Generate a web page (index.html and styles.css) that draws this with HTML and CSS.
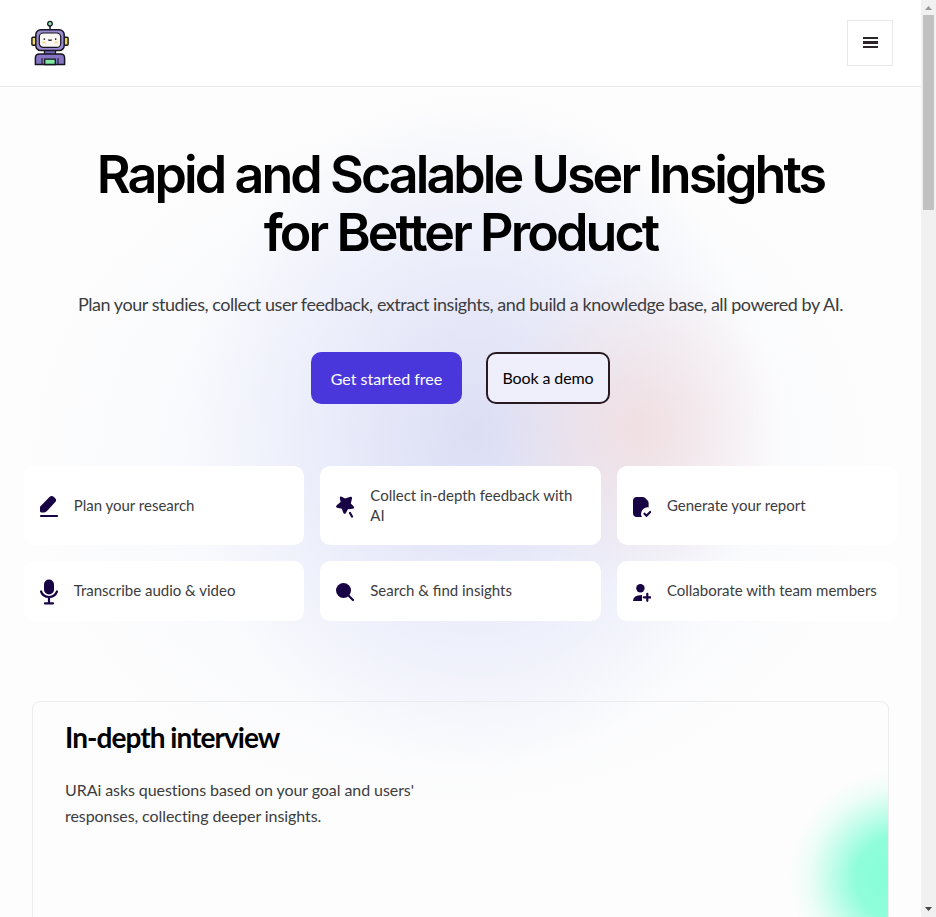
FILE: index.html
```html
<!DOCTYPE html>
<html lang="en">
<head>
<meta charset="utf-8">
<title>URAi</title>
<link rel="stylesheet" href="styles.css">
</head>
<body>
<div class="page">
  <header class="header">
    <svg class="logo" viewBox="0 0 40 46" aria-label="URAi">
      <path d="M20 6v4" stroke="#161522" stroke-width="1.5"/>
      <circle cx="20" cy="3.7" r="2.3" fill="#8be8a4" stroke="#161522" stroke-width="1.3"/>
      <rect x="1.9" y="17.2" width="5" height="8" rx="1" fill="#f3d750" stroke="#161522" stroke-width="1.4"/>
      <rect x="33.1" y="17.2" width="5" height="8" rx="1" fill="#f3d750" stroke="#161522" stroke-width="1.4"/>
      <rect x="14.5" y="29" width="11" height="6" fill="#7565b5" stroke="#161522" stroke-width="1.3"/>
      <rect x="5.8" y="9.8" width="28.4" height="20.8" rx="5" fill="#9b8bd0" stroke="#161522" stroke-width="1.5"/>
      <rect x="9.3" y="13" width="21.4" height="14.4" rx="4" fill="#fbf7f3" stroke="#161522" stroke-width="1.2"/>
      <path d="M14.3 18.2v1.8M25.7 18.2v1.8M18.3 19.7q1.7 1.2 3.4 0" fill="none" stroke="#161522" stroke-width="1.2"/>
      <path d="M12.3 22.5h3.2M24.5 22.5h3.2" stroke="#f2dc9a" stroke-width="2"/>
      <path d="M5.4 44.6V38q0-4 4-4h21.2q4 0 4 4v6.6z" fill="#8575c2" stroke="#161522" stroke-width="1.5"/>
      <path d="M12 44v-6M28 44v-6" stroke="#161522" stroke-width="1"/>
      <path d="M14.7 44.5v-5.3h10.6v5.3z" fill="#83e9a1" stroke="#161522" stroke-width="1.3"/>
    </svg>
    <button class="menu" aria-label="Menu"><span></span><span></span><span></span></button>
  </header>
  <main class="main">
    <h1>Rapid and Scalable User Insights<br>for Better Product</h1>
    <p class="lead">Plan your studies, collect user feedback, extract insights, and build a knowledge base, all powered by AI.</p>
    <div class="actions">
      <a class="btn primary">Get started free</a>
      <a class="btn outline">Book a demo</a>
    </div>
    <div class="features">
      <div class="card">
        <svg viewBox="0 0 18 22" height="22"><path d="M0 10.8 9.2 1.2Q11.5-.9 13.7.8L15.2 2.2Q17 4 15.3 6.1L7 15Q5.8 16.4 4.2 16.4H1.2Q0 16.4 0 15z"/><rect y="19" width="18" height="2.1" rx=".8"/></svg>
        <span>Plan your research</span>
      </div>
      <div class="card">
        <svg viewBox="0 0 18 22" height="22"><path d="M5.2.5 9.1 2.6 14.4.7Q16.5.5 16 2.6L14.8 7.4 18 10.8Q18.7 12.4 16.6 12.7L11.9 13.2 9.8 17.2Q8.6 18.6 7.4 17L5.8 12.8 1 11.7Q-.6 10.7.7 9.2L4.6 6 3.8 1.9Q3.8.1 5.2.5z"/><path class="line" d="m14 17 2 3.5"/></svg>
        <span>Collect in-depth feedback with AI</span>
      </div>
      <div class="card">
        <svg viewBox="0 0 18 22" height="22"><path d="M4 1h5.8q1.2 0 2.1.8l2.7 2.8q1 1 1 2.3v4.5A6.5 6.5 0 0 0 8 18q0 1.5 1 3H4q-4 0-4-4V5q0-4 4-4z"/><path class="line" d="m11.5 17.7 2 2 3.7-3.7"/></svg>
        <span>Generate your report</span>
      </div>
      <div class="card">
        <svg viewBox="0 0 18 26" height="26"><rect x="4" y=".5" width="10" height="15" rx="5"/><path class="line" d="M1 12.5q2 5.5 8 5.5t8-5.5M9 18v6M5 24.4h8"/></svg>
        <span>Transcribe audio &amp; video</span>
      </div>
      <div class="card">
        <svg viewBox="0 0 18 22" height="22"><circle cx="7.5" cy="9.5" r="7.5"/><path class="line" d="m12 14 5 5"/></svg>
        <span>Search &amp; find insights</span>
      </div>
      <div class="card">
        <svg viewBox="0 0 18 22" height="22"><circle cx="7.4" cy="7.2" r="4.2"/><path d="M0 20q0-6 9-6v6z"/><path class="line" d="M14.3 12.8v7M10.8 16.3h7"/></svg>
        <span>Collaborate with team members</span>
      </div>
    </div>
    <section class="panel">
      <h2>In-depth interview</h2>
      <p>URAi asks questions based on your goal and users'<br>responses, collecting deeper insights.</p>
    </section>
  </main>
</div>
<div class="scrollbar">
  <svg width="7" height="4" viewBox="0 0 7 4"><path d="M0 4 3.5 0 7 4z" fill="#999"/></svg>
  <div class="thumb"></div>
  <svg width="7" height="4" viewBox="0 0 7 4"><path d="M0 0h7L3.5 4z" fill="#444"/></svg>
</div>
</body>
</html>
```
FILE: styles.css
```css
* { box-sizing: border-box; }
body {
  margin: 0;
  height: 917px;
  display: flex;
  overflow: hidden;
  background: #fdfdfd;
  color: #3c3c3e;
  font-family: Lato, sans-serif;
}
.page { width: 921px; height: 917px; overflow: hidden; }
.header {
  height: 87px;
  padding: 20px 28px 20px 30px;
  display: flex;
  justify-content: space-between;
  border-bottom: 1px solid #ebebeb;
  background: #fff;
}
.logo { width: 40px; height: 46px; }
.menu {
  width: 46px;
  height: 46px;
  padding: 0 0 1px;
  display: flex;
  flex-direction: column;
  align-items: center;
  justify-content: center;
  gap: 2px;
  border: 1px solid #e8e8e8;
  background: #fff;
}
.menu span { width: 15px; height: 2.5px; background: #2b2529; }
.main {
  height: 830px;
  padding-top: 59px;
  text-align: center;
  background:
    radial-gradient(ellipse 145px 160px at 640px 340px, rgba(244, 214, 210, .6), rgba(250, 222, 212, 0)),
    radial-gradient(ellipse 290px 340px at 475px 345px, rgba(210, 212, 240, .7), rgba(222, 225, 247, .5) 50%, rgba(248, 249, 254, 0)),
    radial-gradient(ellipse 430px 350px at 450px 375px, rgba(240, 243, 254, .85), rgba(253, 253, 253, 0));
}
h1 {
  margin: 0;
  color: #000;
  font: 600 52px/58px Inter, sans-serif;
  letter-spacing: -2.92px;
}
.lead { margin: 28px 0 0; font-size: 18px; line-height: 28px; letter-spacing: -.45px; }
.actions { display: flex; justify-content: center; gap: 24px; margin-top: 34px; }
.btn {
  height: 52px;
  display: flex;
  align-items: center;
  justify-content: center;
  border-radius: 10px;
  font-size: 16px;
}
.primary { width: 151px; padding-top: 1px; background: #4a37dc; color: #fff; }
.outline { width: 124px; padding-bottom: 2px; border: 2px solid #281a20; background: #efeffc; color: #000; letter-spacing: -.1px; }
.features {
  display: grid;
  grid-template-columns: repeat(3, 280.6px);
  grid-template-rows: 79px 60px;
  gap: 16px;
  margin: 62px 0 0 23.5px;
  text-align: left;
}
.card {
  display: flex;
  align-items: center;
  padding: 0 16px;
  gap: 16.2px;
  border-radius: 10px;
  background: #fff;
  font-size: 15px;
  line-height: 20px;
}
.card span { padding-bottom: 2px; }
.card svg { flex: none; width: 18px; position: relative; top: 1px; fill: #180345; }
.card .line { fill: none; stroke: #180345; stroke-width: 2.2; stroke-linecap: round; }
.panel {
  width: 857px;
  height: 400px;
  margin: 80px 0 0 32px;
  padding: 15px 32px;
  border: 1px solid #ececee;
  border-radius: 8px;
  text-align: left;
  background: radial-gradient(circle at 864px 176px, #83ffd6 0, #90fddb 42px, #c5fdeb 67px, #edfdf8 88px, rgba(253, 253, 253, 0) 108px);
}
h2 { margin: 0; color: #000; font-size: 28px; line-height: 40px; letter-spacing: -.95px; }
.panel p { margin: 20px 0 0; font-size: 16px; line-height: 26px; letter-spacing: -.07px; }
.scrollbar {
  width: 15px;
  height: 917px;
  padding: 6px 0;
  display: flex;
  flex-direction: column;
  align-items: center;
  background: #f1f1f1;
}
.scrollbar svg { display: block; flex: none; }
.thumb { width: 11px; height: 195px; margin: 5px 0 auto; background: #c1c1c1; }
```
